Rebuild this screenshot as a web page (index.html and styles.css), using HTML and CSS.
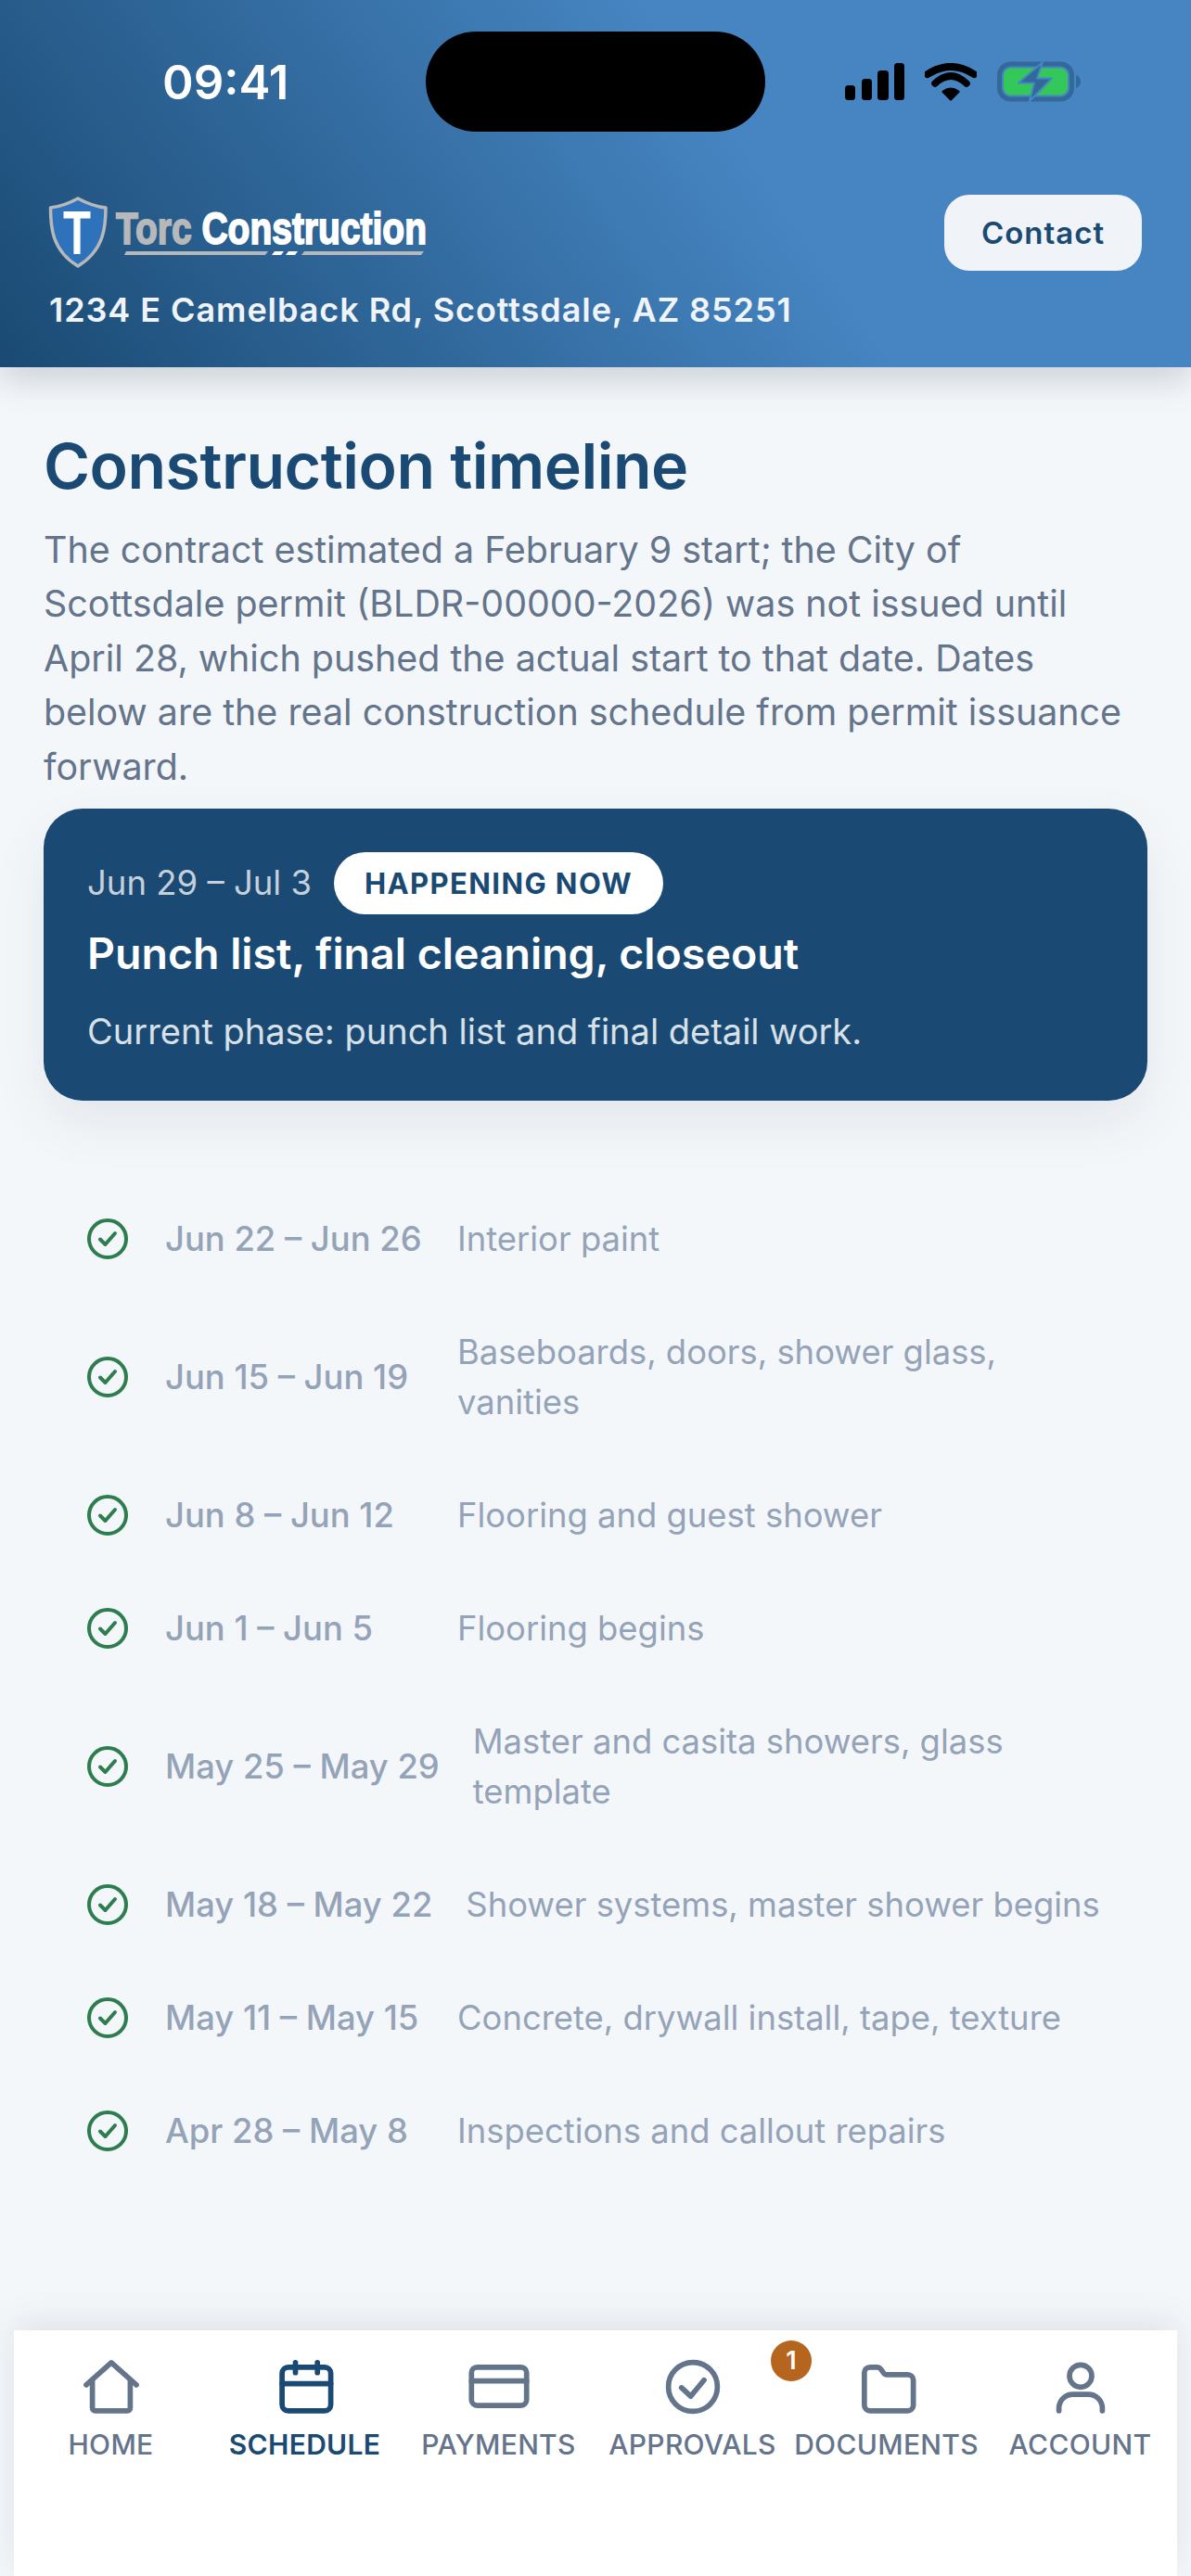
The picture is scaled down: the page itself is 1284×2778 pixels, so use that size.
FILE: index.html
```html
<!DOCTYPE html>
<html lang="en">
<head>
    <meta charset="UTF-8">
    <meta name="viewport" content="width=device-width, initial-scale=1.0">
    <title>Construction timeline</title>
    <link rel="stylesheet" href="styles.css">
</head>
<body>

<header class="header">
    <div class="status-bar">
        <span class="status-time">09:41</span>
        <div class="status-island"></div>
        <div class="status-icons">
            <svg class="icon-signal" viewBox="0 0 64 40" width="64" height="40">
                <rect x="0" y="24" width="11" height="16" rx="3.5"/>
                <rect x="18" y="17" width="11" height="23" rx="3.5"/>
                <rect x="35" y="8" width="12" height="32" rx="3.5"/>
                <rect x="53" y="0" width="11" height="40" rx="3.5"/>
            </svg>
            <svg class="icon-wifi" viewBox="0 0 56 41" width="56" height="41">
                <path d="M3 12 Q28 -4 53 12" fill="none" stroke="#000" stroke-width="8" stroke-linecap="round"/>
                <path d="M11 22 Q28 6 45 22" fill="none" stroke="#000" stroke-width="7.5" stroke-linecap="round"/>
                <path d="M28 39 L20 31 Q28 25 36 31 Z" fill="#000" stroke="#000" stroke-width="3" stroke-linejoin="round"/>
            </svg>
            <svg class="icon-battery" viewBox="0 0 90 44" width="90" height="44">
                <rect x="2.5" y="3" width="78" height="38" rx="12" fill="none" stroke="#33689a" stroke-width="5"/>
                <rect x="7" y="7.500" width="69" height="29" rx="8" fill="#34c759"/>
                <path d="M85 15 q5 2 5 7 t-5 7 Z" fill="#33689a"/>
                <path d="M49 1 L23 23.500 L40 23.500 L35 43 L59 18.500 L43 18.500 Z" fill="#33689a" stroke="#4586c4" stroke-width="2" stroke-linejoin="round"/>
            </svg>
        </div>
    </div>
    <div class="brand-row">
        <div class="brand">
            <svg class="logo" viewBox="0 0 420 85" width="420" height="85">
                <path d="M31 9 C22 14 11 18 1.500 19 C1.500 40 3 65 31 82 C59 65 61 40 61 19 C51 18 40 14 31 9 Z" fill="#2e72bb" stroke="#b6b8ba" stroke-width="3.500" stroke-linejoin="round"/>
                <text x="15" y="69" class="logo-t" textLength="30" lengthAdjust="spacingAndGlyphs">T</text>
                <text x="72" y="58" class="logo-name" textLength="335" lengthAdjust="spacingAndGlyphs"><tspan class="logo-torc">Torc</tspan> <tspan>Construction</tspan></text>
                <polygon points="81,70 233,70 236,66 83,66" fill="#b6b8ba"/>
                <polygon points="240,70 250,70 253,66 243,66" fill="#fff"/>
                <polygon points="255,70 265,70 268,66 258,66" fill="#fff"/>
                <polygon points="272,70 401,70 404,66 275,66" fill="#b6b8ba"/>
            </svg>
            <p class="address">1234 E Camelback Rd, Scottsdale, AZ 85251</p>
        </div>
        <button class="contact-btn">Contact</button>
    </div>
</header>

<main class="content">
    <h1>Construction timeline</h1>
    <p class="intro">The contract estimated a February 9 start; the City of Scottsdale permit (BLDR-00000-2026) was not issued until April 28, which pushed the actual start to that date. Dates below are the real construction schedule from permit issuance forward.</p>

    <section class="current">
        <div class="current-top">
            <span class="current-date">Jun 29 – Jul 3</span>
            <span class="pill">HAPPENING NOW</span>
        </div>
        <h2>Punch list, final cleaning, closeout</h2>
        <p class="current-note">Current phase: punch list and final detail work.</p>
    </section>

    <ul class="phases">
        <li class="phase">
            <svg class="check" viewBox="0 0 44 44"><circle cx="22" cy="22" r="20"/><path d="M14 22.500 L19.500 28 L30 16"/></svg>
            <span class="phase-date">Jun 22 – Jun 26</span>
            <span class="phase-text">Interior paint</span>
        </li>
        <li class="phase">
            <svg class="check" viewBox="0 0 44 44"><circle cx="22" cy="22" r="20"/><path d="M14 22.500 L19.500 28 L30 16"/></svg>
            <span class="phase-date">Jun 15 – Jun 19</span>
            <span class="phase-text">Baseboards, doors, shower glass, vanities</span>
        </li>
        <li class="phase">
            <svg class="check" viewBox="0 0 44 44"><circle cx="22" cy="22" r="20"/><path d="M14 22.500 L19.500 28 L30 16"/></svg>
            <span class="phase-date">Jun 8 – Jun 12</span>
            <span class="phase-text">Flooring and guest shower</span>
        </li>
        <li class="phase">
            <svg class="check" viewBox="0 0 44 44"><circle cx="22" cy="22" r="20"/><path d="M14 22.500 L19.500 28 L30 16"/></svg>
            <span class="phase-date">Jun 1 – Jun 5</span>
            <span class="phase-text">Flooring begins</span>
        </li>
        <li class="phase">
            <svg class="check" viewBox="0 0 44 44"><circle cx="22" cy="22" r="20"/><path d="M14 22.500 L19.500 28 L30 16"/></svg>
            <span class="phase-date">May 25 – May 29</span>
            <span class="phase-text">Master and casita showers, glass template</span>
        </li>
        <li class="phase">
            <svg class="check" viewBox="0 0 44 44"><circle cx="22" cy="22" r="20"/><path d="M14 22.500 L19.500 28 L30 16"/></svg>
            <span class="phase-date">May 18 – May 22</span>
            <span class="phase-text">Shower systems, master shower begins</span>
        </li>
        <li class="phase">
            <svg class="check" viewBox="0 0 44 44"><circle cx="22" cy="22" r="20"/><path d="M14 22.500 L19.500 28 L30 16"/></svg>
            <span class="phase-date">May 11 – May 15</span>
            <span class="phase-text">Concrete, drywall install, tape, texture</span>
        </li>
        <li class="phase">
            <svg class="check" viewBox="0 0 44 44"><circle cx="22" cy="22" r="20"/><path d="M14 22.500 L19.500 28 L30 16"/></svg>
            <span class="phase-date">Apr 28 – May 8</span>
            <span class="phase-text">Inspections and callout repairs</span>
        </li>
    </ul>
</main>

<nav class="tabbar">
    <a class="tab">
        <svg class="tab-icon" viewBox="0 0 24 24"><path d="M3 11.300 L12 3.300 L21 11.300"/><path d="M5.200 9.800 V19.600 a1 1 0 0 0 1 1 H17.800 a1 1 0 0 0 1-1 V9.800"/></svg>
        <span>HOME</span>
    </a>
    <a class="tab tab-active">
        <svg class="tab-icon" viewBox="0 0 24 24"><rect x="3.700" y="4.950" width="17.500" height="15.650" rx="2.200"/><path d="M3.700 10.900 H21.200"/><path d="M8.500 3.300 V6.900"/><path d="M16.400 3.300 V6.900"/></svg>
        <span>SCHEDULE</span>
    </a>
    <a class="tab">
        <svg class="tab-icon" viewBox="0 0 24 24"><rect x="2.100" y="4.950" width="19.800" height="13.750" rx="2"/><path d="M2.100 9.900 H21.900"/></svg>
        <span>PAYMENTS</span>
    </a>
    <a class="tab">
        <svg class="tab-icon" viewBox="0 0 24 24"><circle cx="12" cy="12" r="8.800"/><path d="M7.900 12.300 L11.200 15.400 L16 9.600"/></svg>
        <span>APPROVALS</span>
        <b class="badge">1</b>
    </a>
    <a class="tab">
        <svg class="tab-icon" viewBox="0 0 24 24"><path d="M5.950 4.950 H8.600 a1.500 1.500 0 0 1 1.200 .6 L11 7.200 a1 1 0 0 0 .8 .4 H19.550 a2 2 0 0 1 2 2 V18.600 a2 2 0 0 1-2 2 H5.950 a2 2 0 0 1-2-2 V6.950 a2 2 0 0 1 2-2 Z"/></svg>
        <span>DOCUMENTS</span>
    </a>
    <a class="tab">
        <svg class="tab-icon" viewBox="0 0 24 24"><circle cx="12" cy="8.100" r="4"/><path d="M4.200 20.600 V19.700 a5 5 0 0 1 5-5 H14.800 a5 5 0 0 1 5 5 V20.600"/></svg>
        <span>ACCOUNT</span>
    </a>
</nav>

</body>
</html>
```

FILE: styles.css
```css
* {
    box-sizing: border-box;
}
body {
    font-family: Inter, "Liberation Sans", sans-serif;
    display: flex;
    flex-direction: column;
    height: 2778px;
    margin: 0;
    overflow: hidden;
    background-color: #f4f7fa;
}

/* header */
.header {
    position: relative;
    height: 396px;
    padding: 34px 53px 0;
    background: linear-gradient(55deg, #1a4a73 0%, #4685c2 62%, #4685c2 100%);
    box-shadow: 0 12px 36px rgba(26, 45, 70, 0.2);
    flex-shrink: 0;
}
.status-bar {
    display: flex;
    align-items: center;
    height: 108px;
}
.status-time {
    width: 406px;
    padding-left: 122px;
    color: white;
    font-size: 51px;
    font-weight: 600;
}
.status-island {
    width: 366px;
    height: 108px;
    background-color: black;
    border-radius: 54px;
}
.status-icons {
    display: flex;
    align-items: center;
    gap: 22px;
    margin-left: 86px;
}
.brand-row {
    display: flex;
    justify-content: space-between;
    align-items: flex-start;
    margin-top: 63px;
}
.logo {
    display: block;
    overflow: visible;
}
.logo-t,
.logo-name {
    font-family: "Liberation Sans", sans-serif;
    font-weight: 700;
    font-size: 49px;
}
.logo-t {
    font-size: 66px;
    fill: white;
}
.logo-name {
    fill: white;
    stroke: white;
    stroke-width: 1.800px;
}
.logo-torc {
    fill: #b6b8ba;
    stroke: #b6b8ba;
}
.address {
    margin: 22px 0 0;
    color: #f0f4f8;
    font-size: 36px;
    font-weight: 600;
    line-height: 44px;
    letter-spacing: 0.930px;
    white-space: nowrap;
}
.contact-btn {
    width: 213px;
    height: 82px;
    margin-top: 5px;
    padding: 0;
    border: none;
    border-radius: 27px;
    background-color: #f0f4f8;
    color: #1a4a73;
    font-family: inherit;
    font-size: 33px;
    font-weight: 600;
    letter-spacing: 1px;
}

/* content */
.content {
    flex: 1;
    padding: 66px 47px 0;
}
h1 {
    margin: 0 0 21.500px;
    color: #1a4a73;
    font-size: 68px;
    font-weight: 600;
    line-height: 80px;
    letter-spacing: -0.5px;
}
.intro {
    margin: 0 0 15.500px;
    color: #64748b;
    font-size: 39.400px;
    line-height: 58.500px;
}
.current {
    height: 315px;
    padding: 47px 47px 0;
    border-radius: 42px;
    background-color: #1a4a73;
    box-shadow: 0 24px 60px rgba(26, 45, 70, 0.08);
}
.current-top {
    display: flex;
    align-items: center;
    gap: 24px;
}
.current-date {
    color: #c4d0dc;
    font-size: 36.500px;
}
.pill {
    height: 67px;
    padding: 0 33px;
    border-radius: 34px;
    background-color: white;
    color: #1a4a73;
    font-size: 31px;
    font-weight: 700;
    line-height: 67px;
    letter-spacing: 1.400px;
}
.current h2 {
    margin: 12px 0 0;
    color: white;
    font-size: 46.500px;
    font-weight: 600;
    line-height: 60px;
}
.current-note {
    margin: 27px 0 0;
    color: #d8e0e8;
    font-size: 38px;
    line-height: 54px;
}
.phases {
    margin: 88px 0 0;
    padding: 0 47px;
    list-style: none;
}
.phase {
    display: flex;
    align-items: center;
    padding: 34px 0;
    font-size: 36.400px;
    line-height: 54px;
}
.check {
    width: 44px;
    height: 44px;
    margin-right: 40px;
    flex-shrink: 0;
    fill: none;
    stroke: #2e7d4f;
    stroke-width: 4;
    stroke-linecap: round;
    stroke-linejoin: round;
}
.phase-date {
    min-width: 279px;
    margin-right: 36px;
    flex-shrink: 0;
    color: #94a3b8;
    font-weight: 500;
    white-space: nowrap;
}
.phase-text {
    flex: 1;
    color: #94a3b8;
}

/* bottom nav */
.tabbar {
    display: grid;
    grid-template-columns: repeat(6, 1fr);
    height: 265px;
    margin: 0 15px;
    padding-top: 25px;
    background-color: white;
    box-shadow: 0 -8px 36px rgba(26, 45, 70, 0.1);
    flex-shrink: 0;
}
.tab {
    position: relative;
    display: flex;
    flex-direction: column;
    align-items: center;
    height: 120px;
    color: #64748b;
    font-size: 30px;
    font-weight: 500;
    letter-spacing: 0.3px;
    line-height: 36px;
    white-space: nowrap;
}
.tab-active {
    color: #1a4a73;
    font-weight: 600;
}
.tab-icon {
    width: 72px;
    height: 72px;
    margin-bottom: 8px;
    fill: none;
    stroke: currentColor;
    stroke-width: 1.900;
    stroke-linecap: round;
    stroke-linejoin: round;
}
.badge {
    position: absolute;
    top: -14px;
    right: -24px;
    width: 44px;
    height: 44px;
    border-radius: 50%;
    background-color: #b5651d;
    color: white;
    font-size: 27px;
    font-weight: 600;
    line-height: 44px;
    text-align: center;
    letter-spacing: 0;
}
```
